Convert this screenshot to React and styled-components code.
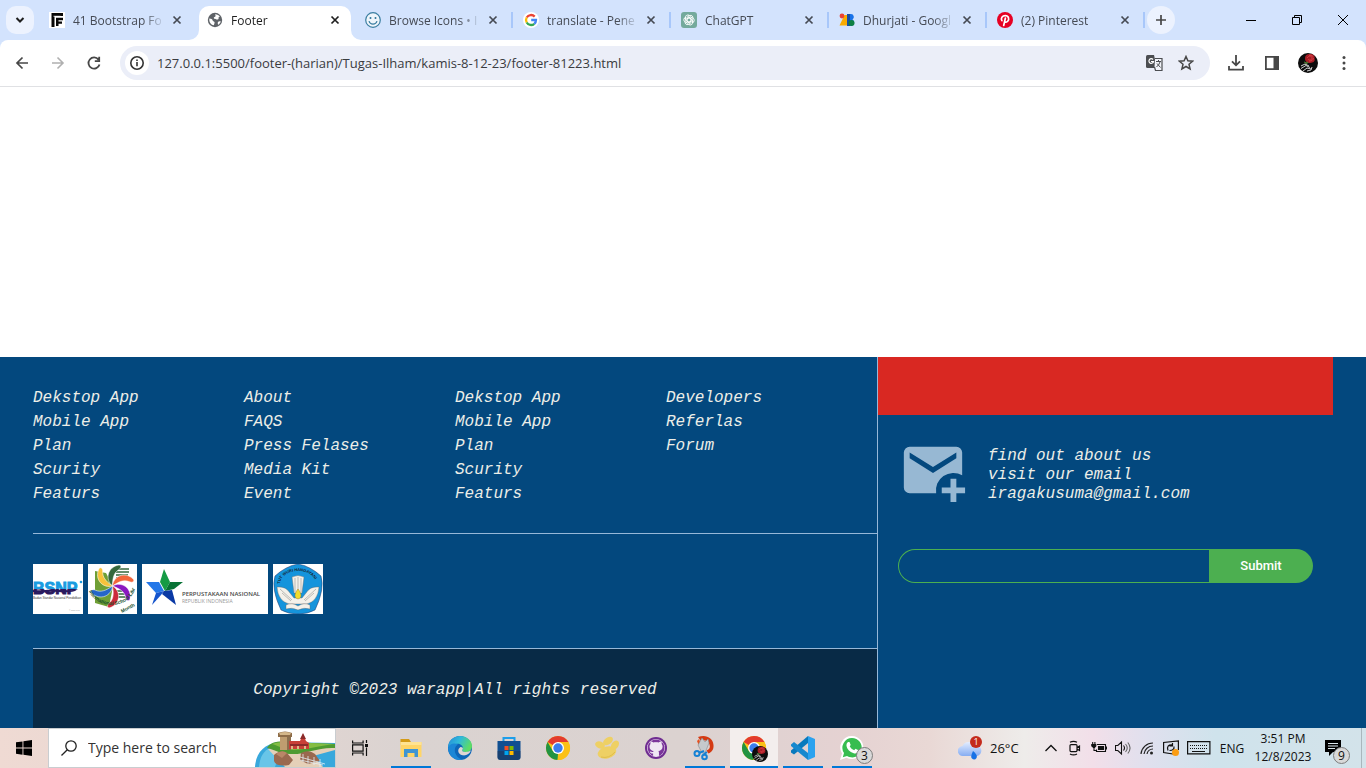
import React from "react";
import styled, { createGlobalStyle, css } from "styled-components";

const ui = `"Open Sans", "Noto Sans", sans-serif`;
const mono = `"Liberation Mono", monospace`;
const line = "#97b8d8";
const green = "#4caf50";

const GlobalStyle = createGlobalStyle`
  *, *::before, *::after { box-sizing: border-box; }
  body { margin: 0; background: #fff; }
  button, input { font: inherit; color: inherit; margin: 0; padding: 0; border: 0; background: none; }
  button { cursor: pointer; }
  svg { display: block; flex: none; }
`;

const Screen = styled.div`
  display: flex;
  flex-direction: column;
  min-height: 100vh;
  font-family: ${ui};
`;

/* ---------- Browser ---------- */

const TabStrip = styled.div`
  display: flex;
  align-items: flex-end;
  height: 40px;
  background: #d3e3fd;
  color: #454a54;
`;

const RoundButton = styled.button`
  display: grid;
  place-items: center;
  width: 28px;
  height: 28px;
  margin: ${(p) => (p.$lead ? "0 7px 6px 6px" : "0 0 6px")};
  border-radius: ${(p) => (p.$lead ? "10px" : "14px")};
  background: #ecf2fe;
  color: #1f1f1f;
`;

const Tabs = styled.div`
  display: flex;
  flex: 0 1 1106px;
  min-width: 0;
`;

const Tab = styled.div`
  position: relative;
  display: flex;
  align-items: center;
  flex: 1 1 0;
  min-width: 0;
  height: 34px;
  padding: 0 14px 6px 8px;
  &::after {
    content: "";
    position: absolute;
    right: 2px;
    top: 6px;
    width: 2px;
    height: 16px;
    background: ${(p) => (p.$line ? "#a8c7fa" : "transparent")};
  }
  ${(p) =>
    p.$active &&
    css`
      color: #1f1f1f;
      z-index: 0;
      &::before {
        content: "";
        position: absolute;
        inset: 0 6px 0 0;
        z-index: -1;
        border-radius: 10px 10px 0 0;
        background: #fff;
      }
    `}
`;

const Flare = styled.svg`
  position: absolute;
  bottom: 0;
  ${(p) => (p.$right ? "right: -4px;" : "left: -10px;")}
`;

const TabTitle = styled.button`
  flex: 1;
  min-width: 0;
  margin-left: 8px;
  padding-top: 2px;
  overflow: hidden;
  white-space: nowrap;
  text-align: left;
  font-size: 12px;
  line-height: 16px;
  mask-image: linear-gradient(90deg, #000 70px, transparent 92px);
`;

const CloseTab = styled.button`
  display: grid;
  place-items: center;
  width: 16px;
  height: 16px;
  margin-left: 8px;
`;

const WindowControls = styled.div`
  display: flex;
  align-self: stretch;
  margin-left: auto;
  color: #000;
`;

const WindowButton = styled.button`
  display: grid;
  place-items: center;
  width: 46px;
`;

const ToolbarBack = styled.div`
  background: #d3e3fd;
`;

const Toolbar = styled.div`
  display: flex;
  align-items: center;
  height: 47px;
  padding: 0 4px;
  border-bottom: 1px solid #e0e1e4;
  border-radius: 8px 8px 0 0;
  background: #fff;
  color: #474747;
`;

const ToolButton = styled.button`
  display: grid;
  place-items: center;
  width: 36px;
  height: 34px;
  color: ${(p) => (p.$muted ? "#b0b0b0" : "inherit")};
`;

const AddressBar = styled.div`
  display: flex;
  align-items: center;
  flex: 1;
  height: 34px;
  margin: 0 8px;
  padding: 0 8px 0 5px;
  border-radius: 17px;
  background: #ebeef8;
`;

const InfoButton = styled.button`
  display: grid;
  place-items: center;
  width: 24px;
  height: 24px;
  border-radius: 12px;
  background: #fff;
  color: #333;
`;

const AddressInput = styled.input`
  flex: 1;
  min-width: 0;
  margin-left: 8px;
  font-size: 13px;
  line-height: 20px;
  color: #3a3b3f;
  outline: 0;
`;

const BarButton = styled(ToolButton)`
  width: 32px;
`;

/* ---------- Web page ---------- */

const Page = styled.main`
  display: flex;
  flex-direction: column;
  justify-content: flex-end;
  flex: 1;
  background: #fff;
`;

const SiteFooter = styled.footer`
  display: grid;
  grid-template-columns: 65% 35%;
  padding: 0 33px;
  background: #03487e;
  color: #eceee8;
  font-family: ${mono};
  font-size: 16px;
  font-style: italic;
`;

const Left = styled.div`
  border-right: 1px solid ${line};
`;

const LinkColumns = styled.nav`
  display: grid;
  grid-template-columns: repeat(4, 1fr);
  padding: 29px 0 27px;
  border-bottom: 1px solid ${line};
`;

const LinkList = styled.ul`
  margin: 0;
  padding: 0;
  list-style: none;
  line-height: 24px;
`;

const FooterLink = styled.a`
  color: inherit;
  text-decoration: none;
`;

const Logos = styled.div`
  display: flex;
  gap: 5px;
  padding: 30px 0 34px;
  border-bottom: 1px solid ${line};
`;

const Copyright = styled.p`
  margin: 0;
  padding: 29px 0 26px;
  background: #082a46;
  line-height: 24px;
  text-align: center;
`;

const RedBanner = styled.div`
  height: 58px;
  background: #d92822;
`;

const Contact = styled.div`
  display: flex;
  gap: 20px;
  padding: 20px;
`;

const ContactText = styled.p`
  margin: 0;
  padding-top: 12px;
  line-height: 19px;
`;

const EmailForm = styled.form`
  display: flex;
  height: 34px;
  margin: 24px 20px 0;
`;

const EmailInput = styled.input`
  flex: 1;
  min-width: 0;
  padding: 0 16px;
  border: 1px solid ${green};
  border-right: 0;
  border-radius: 17px 0 0 17px;
`;

const SubmitButton = styled.button`
  width: 104px;
  padding-bottom: 2px;
  border-radius: 0 17px 17px 0;
  background: ${green};
  color: #fff;
  font-family: Roboto, sans-serif;
  font-size: 13px;
  font-weight: 500;
  font-style: normal;
`;

/* ---------- Taskbar ---------- */

const Taskbar = styled.div`
  display: flex;
  align-items: stretch;
  height: 40px;
  color: #111;
  background: linear-gradient(
    90deg, #efdad3 0%, #e4d6d2 18%, #dad3d1 30%, #dbd2d0 50%, #e5d2d2 62%,
    #e9d8d5 68%, #eeecea 75%, #f2dfe9 80%, #e0e0ee 84%, #cfe3ec 89%, #d3e3ea 100%
  );
`;

const TaskButton = styled.button`
  position: relative;
  display: grid;
  place-items: center;
  width: 48px;
  background: ${(p) => (p.$active ? "#f3eeed" : "none")};
  &::after {
    content: "";
    position: absolute;
    bottom: 0;
    left: ${(p) => (p.$active ? "0" : "4px")};
    right: ${(p) => (p.$active ? "0" : "4px")};
    height: 2px;
    background: ${(p) => (p.$open ? "#0078d7" : "transparent")};
  }
`;

const SearchBox = styled.label`
  display: flex;
  align-items: center;
  width: 288px;
  padding-left: 12px;
  border: 1px solid #c9cdd0;
  background: #fff;
  overflow: hidden;
`;

const SearchInput = styled.input`
  flex: 1;
  min-width: 0;
  margin-left: 11px;
  font-size: 14px;
  line-height: 20px;
  outline: 0;
  &::placeholder { color: #333; opacity: 1; }
`;

const Apps = styled.div`
  display: flex;
  gap: 1px;
  margin-left: 3px;
`;

const Badge = styled.span`
  position: absolute;
  right: ${(p) => p.$right}px;
  bottom: 4px;
  display: grid;
  place-items: center;
  width: 17px;
  height: 17px;
  border: 1px solid #7d7d7d;
  border-radius: 9px;
  background: #d9d9d9;
  font-size: 12px;
  line-height: 14px;
`;

const Tray = styled.div`
  display: flex;
  align-items: stretch;
  margin-left: auto;
  font-size: 12px;
`;

const Weather = styled.button`
  display: flex;
  align-items: center;
  gap: 8px;
  width: 81px;
  font-size: 13px;
`;

const TrayButton = styled.button`
  display: grid;
  place-items: center;
  width: ${(p) => p.$w || 24}px;
`;

const Clock = styled.button`
  width: 68px;
  line-height: 18px;
`;

const Notices = styled(TrayButton)`
  position: relative;
  margin-right: 4px;
  padding-right: 12px;
  border-right: 1px solid #a9b7bd;
`;

/* ---------- Icons ---------- */

const Ico = ({ s = 16, w, h, vb, children, ...rest }) => (
  <svg width={w || s} height={h || s} viewBox={vb || `0 0 ${w || s} ${h || s}`} fill="none" aria-hidden="true" {...rest}>
    {children}
  </svg>
);

const Cross = () => (
  <Ico s={10} stroke="currentColor" strokeWidth="1.7"><path d="m1.500 1.500 7 7m0-7-7 7" /></Ico>
);

const FLogo = () => (
  <Ico><path fill="#fff" d="M0 0h16v16H0z" /><path fill="#080808" d="M2.500 1H14v3H5.500v11h-3z" /><path fill="#080808" d="M7 5.800h7v2.400H9.500v1.300H13v2.300H9.500V14H7z" /><path fill="#fff" d="M4.500 3.800h7v.8h-7z" /></Ico>
);
const Globe = () => (
  <Ico><circle cx="8" cy="8" r="7.200" fill="#5f6368" /><path fill="#fff" d="M2.300 6.500c2 .3 3 .6 3.300 1.900.4 1.100 1.800.7 2 2 .1 1-.7 1.400-.6 2.800C4 13 2 10.600 2.300 6.500zM8 2.200c2.300 0 4 1 5 2.500-1.100-.2-1.600.5-1.400 1.500.3 1.200-1.600 1.500-2.500 1-.7-.4-1.500-.1-2.100-.8-.6-.8.3-1.500 1.100-1.700.8-.3.5-1.500-.1-2.500zM11 10c.6-.9 1.900-.7 2.800-.5-.4 1.300-1.300 2.500-2.600 3.300-.3-.8-.7-1.900-.2-2.800z" /></Ico>
);
const Smile = () => (
  <Ico stroke="#3b7ea1" strokeWidth="1.200"><circle cx="8" cy="8" r="7.300" fill="#eef5fb" /><path d="M4 9.200c1.200 4 6.800 4 8 0" /><path d="M5.500 5v2M10.500 5v2" strokeWidth="1.600" /></Ico>
);
const GLetter = () => (
  <Ico><circle cx="8" cy="8" r="8" fill="#fff" /><g strokeWidth="2.300"><path stroke="#ea4335" d="M3.700 5.500A5 5 0 0 1 11.700 4.600" /><path stroke="#fbbc05" d="M3.700 10.500a5 5 0 0 1 0-5" /><path stroke="#34a853" d="M11.300 11.800a5 5 0 0 1-7.600-1.300" /><path stroke="#4285f4" d="M8.200 8h4.800a5 5 0 0 1-1.700 3.800" /></g></Ico>
);
const GptLogo = () => (
  <Ico><rect width="16" height="16" rx="3" fill="#74aa9c" /><g stroke="#fff" strokeWidth=".9">{[0, 60, 120, 180, 240, 300].map((a) => <path key={a} transform={`rotate(${a} 8 8)`} d="M6 8.800V5.200l2.600-1.600c2-1 4 1 3.200 2.900M8 5.700l2.300 1.300" />)}</g></Ico>
);
const FontsLogo = () => (
  <Ico><path fill="#f9ab00" d="M5.500 3H9v10.500H.5z" /><circle cx="3" cy="4" r="2.400" fill="#ea4335" /><path fill="#1a73e8" d="M8 2h4a3 3 0 0 1 1.500 5.500A3.500 3.500 0 0 1 12 14H8z" /><path fill="#174ea6" d="M8 2h3v12H8z" /><circle cx="12.500" cy="11" r="3" fill="#0d8043" /></Ico>
);
const PinLogo = () => (
  <Ico><circle cx="8" cy="8" r="8" fill="#e60023" /><path stroke="#fff" strokeWidth="1.700" strokeLinecap="round" d="M4.900 8.700C3.400 6 5.400 3.700 8.200 3.700c3.600 0 4.300 3.600 2.500 5.600-1.100 1.200-2.700 1-3.100-.1M8.400 6l-1.700 7.500" /></Ico>
);

const Avatar = ({ s = 20 }) => (
  <Ico s={s} vb="0 0 20 20"><circle cx="10" cy="10" r="10" fill="#0c0c0c" /><path fill="#a51c24" d="M7 5c0-3 3-4.500 5-4 3-.3 5.500 2 4.500 4.500 1 2-1 4.500-3.500 4.200C10 11 6.500 8.500 7 5z" /><path stroke="#e2464d" d="M9 5c2-3 5-2 5 0s-3 3-4 1m1 2c3 0 4-1 4.500-3M11 2.500c1.500-.5 3 0 4 1" strokeWidth=".7" /><path stroke="#4d7a35" strokeWidth="1.200" d="M10 9l-3 3M6 9l3 1" /><path stroke="#d0d0d0" strokeWidth="1" d="m3 13 4-2 4 2M3 15.500l5-3 4 2M5 18l4-3 4 1M9 18l4-1 1-3" /></Ico>
);

const ChromeLogo = () => (
  <>
    <circle cx="12" cy="12" r="12" fill="#fbc116" />
    <path fill="#e33b2e" d="M12 12 1.600 6A12 12 0 0 1 22.400 6H12z" />
    <path fill="#229342" d="M1.600 6 6.800 15 12 18l-.5 6A12 12 0 0 1 1.600 6z" />
    <path fill="#fbc116" d="M12 6h10.400A12 12 0 0 1 11.500 24l5.700-9z" />
    <circle cx="12" cy="12" r="6" fill="#fff" /><circle cx="12" cy="12" r="4.700" fill="#3b7ded" />
  </>
);

const MailPlus = () => (
  <Ico s={70} vb="0 0 24 24"><path fill="#97b8d3" fillRule="evenodd" d="M4 4h16a2 2 0 0 1 2 2v7.800A6 6 0 0 0 13.080 20H4a2 2 0 0 1-2-2V6a2 2 0 0 1 2-2zm8 9 8-5V6l-8 5-8-5v2z" /><path fill="#97b8d3" d="M18 15h2v3h3v2h-3v3h-2v-3h-3v-2h3z" /></Ico>
);

/* ---------- Partner logos ---------- */

const LogoText = styled.text`
  font-family: "Liberation Sans", sans-serif;
  font-style: normal;
`;

const Bsnp = () => (
  <svg width="50" height="50" viewBox="0 0 50 50" role="img" aria-label="BSNP">
    <defs><linearGradient id="bs" x1="0" y1="0" x2="0" y2="1"><stop offset=".5" stopColor="#1a9be0" /><stop offset=".52" stopColor="#2a1a5e" /></linearGradient></defs>
    <path fill="#fff" d="M0 0h50v50H0z" />
    <LogoText x="0" y="30" fontWeight="700" fontSize="16" fill="url(#bs)" stroke="url(#bs)">BSNP</LogoText>
    <path fill="#2a1a5e" d="M0 26c8 1 15-1 23-.5 8 .5 15 1.500 22-.5l-3 2c-10 3-19 0-27 1-6 .5-10 1-15 0z" />
    <circle cx="48" cy="18" r="1.300" fill="#1a9be0" />
    <LogoText x="0" y="35" fontSize="3" fill="#333">Badan Standar Nasional Pendidikan</LogoText>
    <LogoText x="36" y="47" fontSize="2" fill="#999">© bsnp.or.id</LogoText>
  </svg>
);

const petals = [
  ["#35683c", 0], ["#f2663b", 55], ["#8a19c0", 110], ["#cc2a3a", 170], ["#2566c9", 235], ["#f8c23a", 305],
];
const Library = () => (
  <svg width="49" height="50" viewBox="0 0 49 50" role="img" aria-label="International School Library Month">
    <path fill="#fff" d="M0 0h49v50H0z" />
    <path fill="#6f9f35" d="m7 7 11 2 7 13-4 21-14-4z" />
    <path stroke="#35683c" strokeWidth="1.300" d="M29 5h12M28 8h13M28 11h12M28 14h12M29 27h11M28 30h11M28 33h10" />
    {petals.map(([c, a]) => <path key={c} fill={c} stroke="#fff" strokeWidth=".5" transform={`rotate(${a} 24.500 22)`} d="M24.500 22C17 16 19 3 31 1c2.500 0 2.500 3 0 4.500-5 3-6.500 8-6.500 16.500z" />)}
    <path id="arc" d="M1 27A24 21 0 0 0 47 25" fill="none" />
    <LogoText fontWeight="700" fontSize="5" fill="#174f2c"><textPath href="#arc">International School Library</textPath></LogoText>
    <LogoText x="34" y="49" transform="rotate(-28 34 49)" fontWeight="700" fontSize="5" fill="#174f2c">Month</LogoText>
  </svg>
);

const Perpusnas = () => (
  <svg width="126" height="50" viewBox="0 0 126 50" role="img" aria-label="Perpustakaan Nasional Republik Indonesia">
    <path fill="#fff" d="M0 0h126v50H0z" />
    <path fill="#159b45" d="m22 5 6 13-5 9-5-9z" /><path fill="#087336" d="m23 27 5-9h13l-9 7z" />
    <path fill="#2477e8" d="M4 18h13l5 9-8 2z" /><path fill="#1554cc" d="m14 29 8-2-3 4-9 10z" />
    <path fill="#0a39a5" d="m22 27 8-1 4 15-14-11z" />
    <text x="40" y="32" fontFamily="Open Sans" fontStyle="normal" fontWeight="600" fontSize="6" fill="#484848">PERPUSTAKAAN NASIONAL</text>
    <text x="40" y="39" fontFamily="Open Sans" fontStyle="normal" fontSize="5" fill="#999">REPUBLIK INDONESIA</text>
  </svg>
);

const TutWuri = () => (
  <svg width="50" height="50" viewBox="0 0 50 50" role="img" aria-label="Tut Wuri Handayani">
    <path fill="#fff" d="M0 0h50v50H0z" />
    <path fill="#1594dc" stroke="#236" strokeWidth=".5" d="M25 0Q37 2 48 12 52 25 42 46 35 50 25 50T8 46Q-2 25 2 12 13 2 25 0z" />
    <path id="tut" d="M7 20A18 13 0 0 1 43 20" fill="none" />
    <LogoText fontWeight="700" fontSize="4" fill="#15202a"><textPath href="#tut">TUT WURI HANDAYANI</textPath></LogoText>
    <g fill="#f4f1ea" stroke="#666" strokeWidth=".4">
      <path d="M19 13q6-3 12 0l-2 16h-8z" />
      <path d="M4 23q9-1 13 6l4 5h8l4-5q4-7 13-6-1 14-12 17H16Q5 37 4 23z" />
      <path d="M13 41q6-3 12 1 6-4 12-1v4q-6-2-12 1-6-3-12-1z" />
      <path fill="none" d="M22 14v14m3-15v15m3-14v14M7 25l12 11M9 29l9 8M43 25 31 36m10-7-9 8" />
    </g>
    <path fill="#f2dc2c" stroke="#996d18" strokeWidth=".4" d="M25 25c4 5 4 9 0 10-4-1-4-5 0-10z" />
  </svg>
);

/* ---------- Taskbar drawings ---------- */

const Castle = () => (
  <svg width="80" height="38" viewBox="0 0 80 38" aria-hidden="true">
    <path fill="#38a8dc" d="M0 38C1 22 10 16 22 13l58 1v24z" />
    <path fill="#68c5e8" d="M4 38c1-12 6-18 14-20l6 8-4 12z" />
    <path fill="#e5d0b8" d="m13 20 30 1 37-4v4l-22 6 10 11H30z" />
    <path fill="#4d9b31" d="M12 19c4-7 13-7 22-6l46 2v4c-18-1-30 7-45 6-9 0-15-4-23-6z" />
    <path fill="#84bd44" d="M17 15c8-4 25 0 38-1l25 1c-17 2-30 6-42 6-9 0-14-4-21-6z" />
    <path fill="#bf9d70" d="M25 6h11v15H25z" /><path fill="#8b704f" d="M32 6h4v15h-4z" /><path fill="#8e6d49" d="M23 4q7-3 14 0v4H23z" /><path fill="#d4b78a" d="M24 4q6-2 12 0l-1 2H25z" />
    <path fill="#c94038" d="m34 12 11 0 3-7 3 7 3 2v6H34z" /><path fill="#8c2b2a" d="m45 10 3-6 3 6zM35 15h18v2H35z" /><path fill="#e3b68a" d="M36 17h2v3h-2zm6 0h2v3h-2zm7 0h2v3h-2z" />
    <path fill="#9a694f" d="M19 26q6-6 13-2l6 7-4 5q-13 2-15-4zM46 24q8-4 14 1l5 7-12 3-8-4z" /><path fill="#b98767" d="M21 25q6-5 11-1l-5 5z" />
    <path stroke="#e4eff4" strokeWidth=".8" fill="none" d="m45 28 25 7M45 31l23 5M48 25v8m5-6v8m6-7v8m6-6v8" />
  </svg>
);

const apps = [
  { name: "File Explorer", open: true, art: <><path fill="#d49b16" d="M1.500 3H10l2 3v3H1.500z" /><path fill="#ffd566" d="M1.500 6H22.500v15H1.500z" /><path fill="#ffe391" d="M1.500 6h21v3h-21z" /><path fill="#3f95d2" d="M5 13h14v8h-3.500v-4H8.500v4H5z" /></> },
  { name: "Edge", art: <><defs><linearGradient id="e1" x1="0" y1="0" x2="1" y2=".4"><stop stopColor="#2389d8" /><stop offset=".5" stopColor="#30b9da" /><stop offset="1" stopColor="#5ddc65" /></linearGradient></defs><circle cx="12" cy="12" r="12" fill="#0d66b8" /><path fill="url(#e1)" d="M0 11.500C0 5 5.500 0 12 0s12 4.500 12 10c0 4-3 6-6.500 6-3 0-4-1-3-2.500C16 10 12 7 8 8 4 8.500 1 10 0 11.500z" /><path fill="#1b86d6" d="M0 12c1-4 6-5.500 10-3.500C7 10 6 14 7.500 17.500 9 21 12 23.500 15 23.600A12 12 0 0 1 0 12z" /><path fill="#ded6d4" d="M14.500 13.500c-1 1.500 0 2.500 3 2.500 2.500 0 4-.6 5.300-1.700C22 18 18 20 14.500 19.300 9.500 18.300 9 13 12.500 11c2 0 3 1 2 2.500z" /></> },
  { name: "Store", art: <><path stroke="#1d9eea" strokeWidth="2" d="M6.500 7V2h11v5" /><path fill="#104f91" d="M.5 5h23v16q0 3-3 3h-17q-3 0-3-3z" /><path fill="#1d3558" d="M.5 15h23v6q0 3-3 3h-17q-3 0-3-3z" opacity=".55" /><path fill="#f25022" d="M7.500 10h4v4h-4z" /><path fill="#7fba00" d="M12.500 10h4v4h-4z" /><path fill="#00a4ef" d="M7.500 15h4v4h-4z" /><path fill="#ffb900" d="M12.500 15h4v4h-4z" /></> },
  { name: "Chrome", art: <ChromeLogo /> },
  { name: "Paw", art: <><g fill="#eed064"><ellipse cx="12" cy="16.500" rx="9.500" ry="6" transform="rotate(-15 12 16.500)" /><ellipse cx="5" cy="9" rx="5" ry="3.500" transform="rotate(20 5 9)" /><ellipse cx="13" cy="5" rx="5.500" ry="3.500" transform="rotate(-35 13 5)" /><ellipse cx="20" cy="9" rx="5" ry="3.500" transform="rotate(-55 20 9)" /></g><path stroke="#dcb842" strokeWidth=".8" d="M6 21q8 2 14-5" /></> },
  { name: "GitHub", art: <><circle cx="12" cy="12" r="11" fill="#6f2c91" /><circle cx="12" cy="12" r="9" fill="#efe6f3" /><path fill="#7b359b" d="M12 3.500A8.500 8.500 0 0 0 9.200 20v-2.500c-2 .4-2.800-.7-3.500-1.800 1.500 0 1.500 1.300 3.500.9 0-.8.300-1.300.7-1.600-3-.4-4.400-1.700-4.400-4.400 0-1.200.400-2 1-2.700-.2-.8-.2-1.800.2-2.500 1 0 2 .6 2.600 1.100 1.700-.4 3.600-.4 5.400 0 .7-.5 1.700-1.100 2.700-1.100.4.800.4 1.700.2 2.500.6.7 1 1.500 1 2.700 0 2.700-1.500 4-4.500 4.400.5.400.8 1.100.8 2V20A8.500 8.500 0 0 0 12 3.500z" fillRule="evenodd" /><path fill="#efe6f3" d="M9.500 20v-3c-2 .4-2.800-.7-3.500-1.800 1.500 0 1.500 1.200 3.500.8 0-.5.3-.9.6-1.200-2.800-.4-4-1.700-4-4.100 0-1.100.3-1.900.9-2.500-.2-.8-.1-1.600.1-2.200.9 0 1.900.5 2.500 1 1.500-.4 3.300-.4 4.800 0 .6-.5 1.600-1 2.500-1 .3.700.3 1.500.1 2.200.6.600.9 1.400.9 2.500 0 2.400-1.300 3.700-4 4.100.5.400.7 1 .7 1.800V20z" /></> },
  { name: "Snipping Tool", open: true, art: <><path fill="#d43a13" d="M5 1c8-3 15 1 15.500 8 .4 5-2 7-5 8.500l-2-3c3-1 4-3 3-6-.8-3-4-5-9-4z" /><path fill="#e8501e" d="M4 5 6 3l5 13-2 1z" /><path fill="#c5c9cc" stroke="#858b91" strokeWidth=".6" d="m9 2 3 4 3-3 1 4-4 10H9L5 9z" /><g stroke="#1682d4" strokeWidth="2"><circle cx="4" cy="17.500" r="2.500" /><circle cx="11.500" cy="21" r="2.300" /><path d="m6 17 5-2m-1 4 4-3" /></g></> },
  { name: "Chrome profile", open: true, active: true, art: <><ChromeLogo /><svg x="10" y="10" width="16" height="16" overflow="visible"><Avatar s={16} /></svg></> },
  { name: "Visual Studio Code", open: true, art: <><path fill="#0879bd" d="M17 0v7L3 18.500l-3-2v-2z" /><path fill="#1688ce" d="M0 8.500 3 6l14 11v7L0 10z" /><path fill="#2ba2ef" d="m17 0 7 3v18l-7 3z" /></> },
  { name: "WhatsApp", open: true, badge: 3, art: <><path fill="#fff" d="M12 0a11.500 11.500 0 1 1-5.500 21.700L0 24l2-6.500A11.500 11.500 0 0 1 12 0z" /><path fill="#37bd50" d="M12 2a9.700 9.700 0 1 1-5 18l-4.200 1.300L4 17A9.700 9.700 0 0 1 12 2z" /><path fill="#fff" d="M8 6h1.500l1.200 3-1 1.300c1 2 2.500 3.200 4.500 4l1.300-1.500 3 1.500c0 3-3 3.700-4.800 3C9.500 15.800 7 13 6.500 10c-.2-2 .5-3.300 1.500-4z" /></> },
];

const tabs = [
  ["41 Bootstrap Foo", <FLogo />],
  ["Footer", <Globe />],
  ["Browse Icons • Ic", <Smile />],
  ["translate - Penel", <GLetter />],
  ["ChatGPT", <GptLogo />],
  ["Dhurjati - Googl", <FontsLogo />],
  ["(2) Pinterest", <PinLogo />],
];

const columns = [
  ["Dekstop App", "Mobile App", "Plan", "Scurity", "Featurs"],
  ["About", "FAQS", "Press Felases", "Media Kit", "Event"],
  ["Dekstop App", "Mobile App", "Plan", "Scurity", "Featurs"],
  ["Developers", "Referlas", "Forum"],
];

function Browser() {
  return (
    <header>
      <TabStrip>
        <RoundButton $lead aria-label="Search tabs"><Ico s={10} stroke="currentColor" strokeWidth="2"><path d="m1.500 3 3.500 3.500L8.500 3" /></Ico></RoundButton>
        <Tabs>
          {tabs.map(([title, icon], i) => (
            <Tab key={title} $active={i === 1} $line={i > 1}>
              {i === 1 && <><Flare width="10" height="10"><path fill="#fff" d="M10 0v10H0A10 10 0 0 0 10 0z" /></Flare><Flare $right width="10" height="10"><path fill="#fff" d="M0 0v10h10A10 10 0 0 1 0 0z" /></Flare></>}
              {icon}
              <TabTitle>{title}</TabTitle>
              <CloseTab aria-label={`Close ${title}`}><Cross /></CloseTab>
            </Tab>
          ))}
        </Tabs>
        <RoundButton aria-label="New tab"><Ico s={12} stroke="#474747" strokeWidth="1.700"><path d="M6 1v10M1 6h10" /></Ico></RoundButton>
        <WindowControls>
          <WindowButton aria-label="Minimize"><Ico s={10} stroke="currentColor"><path d="M0 5.500h10" /></Ico></WindowButton>
          <WindowButton aria-label="Restore"><Ico s={10} stroke="currentColor"><path d="M.5 2.500h7v7h-7zM2.500 2V.5h7v7H8" /></Ico></WindowButton>
          <WindowButton aria-label="Close window"><Ico s={10} stroke="currentColor"><path d="m0 0 10 10M10 0 0 10" /></Ico></WindowButton>
        </WindowControls>
      </TabStrip>
      <ToolbarBack>
        <Toolbar>
          <ToolButton aria-label="Back"><Ico stroke="currentColor" strokeWidth="1.700"><path d="M14 8H3m5.500-5.500L3 8l5.500 5.500" /></Ico></ToolButton>
          <ToolButton aria-label="Forward" $muted><Ico stroke="currentColor" strokeWidth="1.600"><path d="M2 8h11M7.500 2.500 13 8l-5.500 5.500" /></Ico></ToolButton>
          <ToolButton aria-label="Reload"><Ico stroke="currentColor" strokeWidth="1.800"><path d="M13.500 9.500A5.600 5.600 0 1 1 12.500 4.600M13.200 1.800v4.400H8.800" /></Ico></ToolButton>
          <AddressBar>
            <InfoButton aria-label="Site information"><Ico stroke="currentColor" strokeWidth="1.600"><circle cx="8" cy="8" r="6.200" /><path d="M8 7v4.200M8 4.600v1.500" /></Ico></InfoButton>
            <AddressInput aria-label="Address" defaultValue="127.0.0.1:5500/footer-(harian)/Tugas-Ilham/kamis-8-12-23/footer-81223.html" />
            <BarButton aria-label="Translate">
              <Ico w={17} h={16}><path fill="#4b4d51" d="M1.500 0H8l3 13H1.500Q0 13 0 11.500v-10Q0 0 1.500 0z" /><path stroke="#4b4d51" strokeWidth="1.200" d="M9 3.500h7v12H9.500L8.500 12" fill="#f2f4fa" /><path stroke="#fff" strokeWidth="1.200" d="M7 4.500a2.300 2.300 0 1 0 .5 2H5" /><path stroke="#4b4d51" d="M10 6.500h5M12.500 5v1.500M14 7q-1 3-3.500 5M11 8.500l3.500 4" /></Ico>
            </BarButton>
            <BarButton aria-label="Bookmark"><Ico stroke="currentColor" strokeWidth="1.500"><path d="m8 1.500 1.900 4.300 4.700.4L11 9.300l1.100 4.700L8 11.500 3.900 14 5 9.300 1.400 6.200l4.700-.4z" /></Ico></BarButton>
          </AddressBar>
          <ToolButton aria-label="Downloads"><Ico stroke="currentColor" strokeWidth="1.800"><path d="M8 0v10M4 6.300l4 4 4-4M1 11v3.700h14V11" /></Ico></ToolButton>
          <ToolButton aria-label="Side panel"><Ico><path stroke="currentColor" strokeWidth="1.800" d="M1.900 1.900h12.200v12.200H1.900z" /><path fill="currentColor" d="M9.500 2H14v12H9.500z" /></Ico></ToolButton>
          <ToolButton aria-label="Profile"><Avatar /></ToolButton>
          <ToolButton aria-label="Menu"><Ico><circle cx="8" cy="2.500" r="1.500" fill="#474747" /><circle cx="8" cy="8" r="1.500" fill="#474747" /><circle cx="8" cy="13.500" r="1.500" fill="#474747" /></Ico></ToolButton>
        </Toolbar>
      </ToolbarBack>
    </header>
  );
}

function WebPage() {
  return (
    <Page>
      <SiteFooter>
        <Left>
          <LinkColumns aria-label="Footer">
            {columns.map((links, i) => (
              <LinkList key={i}>{links.map((l) => <li key={l}><FooterLink href="#">{l}</FooterLink></li>)}</LinkList>
            ))}
          </LinkColumns>
          <Logos><Bsnp /><Library /><Perpusnas /><TutWuri /></Logos>
          <Copyright>Copyright ©2023 warapp|All rights reserved</Copyright>
        </Left>
        <section>
          <RedBanner />
          <Contact>
            <MailPlus />
            <ContactText>find out about us<br />visit our email<br />iragakusuma@gmail.com</ContactText>
          </Contact>
          <EmailForm onSubmit={(e) => e.preventDefault()}>
            <EmailInput type="email" aria-label="Email" />
            <SubmitButton type="submit">Submit</SubmitButton>
          </EmailForm>
        </section>
      </SiteFooter>
    </Page>
  );
}

function WindowsTaskbar() {
  return (
    <Taskbar>
      <TaskButton aria-label="Start"><Ico><path fill="#000" d="M0 2.300 6.500 1.400v6.200H0zM7.400 1.300 16 0v7.600H7.400zM0 8.500h6.500v6.200L0 13.800zM7.400 8.500H16V16l-8.600-1.200z" /></Ico></TaskButton>
      <SearchBox>
        <Ico stroke="#222" strokeWidth="1.300"><circle cx="10" cy="6" r="5.200" /><path d="M6.300 9.700.5 15.500" /></Ico>
        <SearchInput aria-label="Search" placeholder="Type here to search" />
        <Castle />
      </SearchBox>
      <TaskButton aria-label="Task view"><Ico stroke="#111" strokeWidth="1.200"><path d="M.6.500V3h10.500V.5M.6 15.500V13h10.500v2.500M.6 4.800h10.500v6.400H.6zM14.500 0v3M14.500 7.500V16" /><path fill="#111" stroke="none" d="M13 4h3v3h-3z" /></Ico></TaskButton>
      <Apps>
        {apps.map((a) => (
          <TaskButton key={a.name} aria-label={a.name} $open={a.open} $active={a.active}>
            <Ico s={24} overflow="visible">{a.art}</Ico>
            {a.badge && <Badge $right={3}>{a.badge}</Badge>}
          </TaskButton>
        ))}
      </Apps>
      <Tray>
        <Weather>
          <Ico s={24}><defs><linearGradient id="cl" x1="0" y1="0" x2="0" y2="1"><stop stopColor="#e4edff" /><stop offset="1" stopColor="#86adf2" /></linearGradient></defs><path fill="url(#cl)" d="M5 20a5 5 0 0 1-.5-10A7 7 0 0 1 17 9.500 5.300 5.300 0 0 1 19 20z" /><path fill="#1771e5" d="M15 15q5 4 3.500 7-2 3-5 0-1-2 1.500-7z" /><circle cx="18" cy="6" r="6" fill="#c42b1c" /><text x="18" y="9" fontSize="9" textAnchor="middle" fill="#fff" fontFamily="Open Sans">1</text></Ico>
          26°C
        </Weather>
        <TrayButton aria-label="Show hidden icons"><Ico w={12} h={8} stroke="#111" strokeWidth="1.300"><path d="m.5 7 5.500-5.500L11.500 7" /></Ico></TrayButton>
        <TrayButton aria-label="Meet now"><Ico stroke="#111" strokeWidth="1.200"><path d="M4 4.600h5q1 0 1 1v5q0 1-1 1H4q-1 0-1-1v-5q0-1 1-1zM10 7.500l2.500-1.500v4.500L10 9M3 2.300q3.500-2 7 0M3 13.900q3.500 2 7 0" /></Ico></TrayButton>
        <TrayButton aria-label="Battery"><Ico stroke="#111" strokeWidth="1.100"><path d="M6 4.500h8.500v7h-9V9.500M15.500 6.500v3" /><path fill="#111" d="M7.500 6.500h5v3h-5z" /><path fill="#111" d="M.800 4.500h4V6L3.500 7.500h-1L.8 6z" /><path d="M3 7v3.500h3M1.700 2v2.500m2.200-2.500v2.500" /></Ico></TrayButton>
        <TrayButton aria-label="Volume"><Ico stroke="#111" strokeWidth="1.100"><path d="M.5 5.500h2.300L6.500 2v12L2.800 10.500H.5zM8.500 5.500q2 2.500 0 5" /><path stroke="#666" d="M10.500 4q3.500 4 0 8M12.800 2.500q4.500 5.500 0 11" /></Ico></TrayButton>
        <TrayButton aria-label="Network"><Ico w={14} h={14} stroke="#222" strokeWidth="1.200"><path d="M1 13A12 12 0 0 1 13 2M4 13a9 9 0 0 1 9-8M7 13a6 6 0 0 1 6-5" /><circle cx="11.500" cy="12" r="1.500" fill="#222" stroke="none" /></Ico></TrayButton>
        <TrayButton aria-label="Updates"><Ico stroke="#111" strokeWidth="1.200"><path d="M10 14 .600 12.500v-10L15.400 1v9M5 10.500q-2-6 4.500-5.500M9.500 3v3H6.500M6.500 10.500q5 0 4.500-4" /><circle cx="12.500" cy="12.500" r="3.500" fill="#fb9d13" stroke="none" /></Ico></TrayButton>
        <TrayButton aria-label="Touch keyboard" $w={32}><Ico w={24} h={14} stroke="#111"><path d="M.6.600h22.300v12.300H.6z" strokeWidth="1.200" /><path strokeDasharray="1 1" d="M3 4.500h18M3 7.500h18" /><path d="M5 10.500h13" /></Ico></TrayButton>
        <TrayButton $w={34}>ENG</TrayButton>
        <Clock>3:51 PM<br />12/8/2023</Clock>
        <Notices aria-label="Notifications" $w={45}><Ico><path fill="#000" d="M0 0h16v12H8l-4 4v-4H0z" /><path stroke="#dce7ec" d="M3 3.500h10M3 6h10M3 8.500h7" /></Ico><Badge $right={11}>9</Badge></Notices>
      </Tray>
    </Taskbar>
  );
}

export default function App() {
  return (
    <Screen>
      <GlobalStyle />
      <Browser />
      <WebPage />
      <WindowsTaskbar />
    </Screen>
  );
}
